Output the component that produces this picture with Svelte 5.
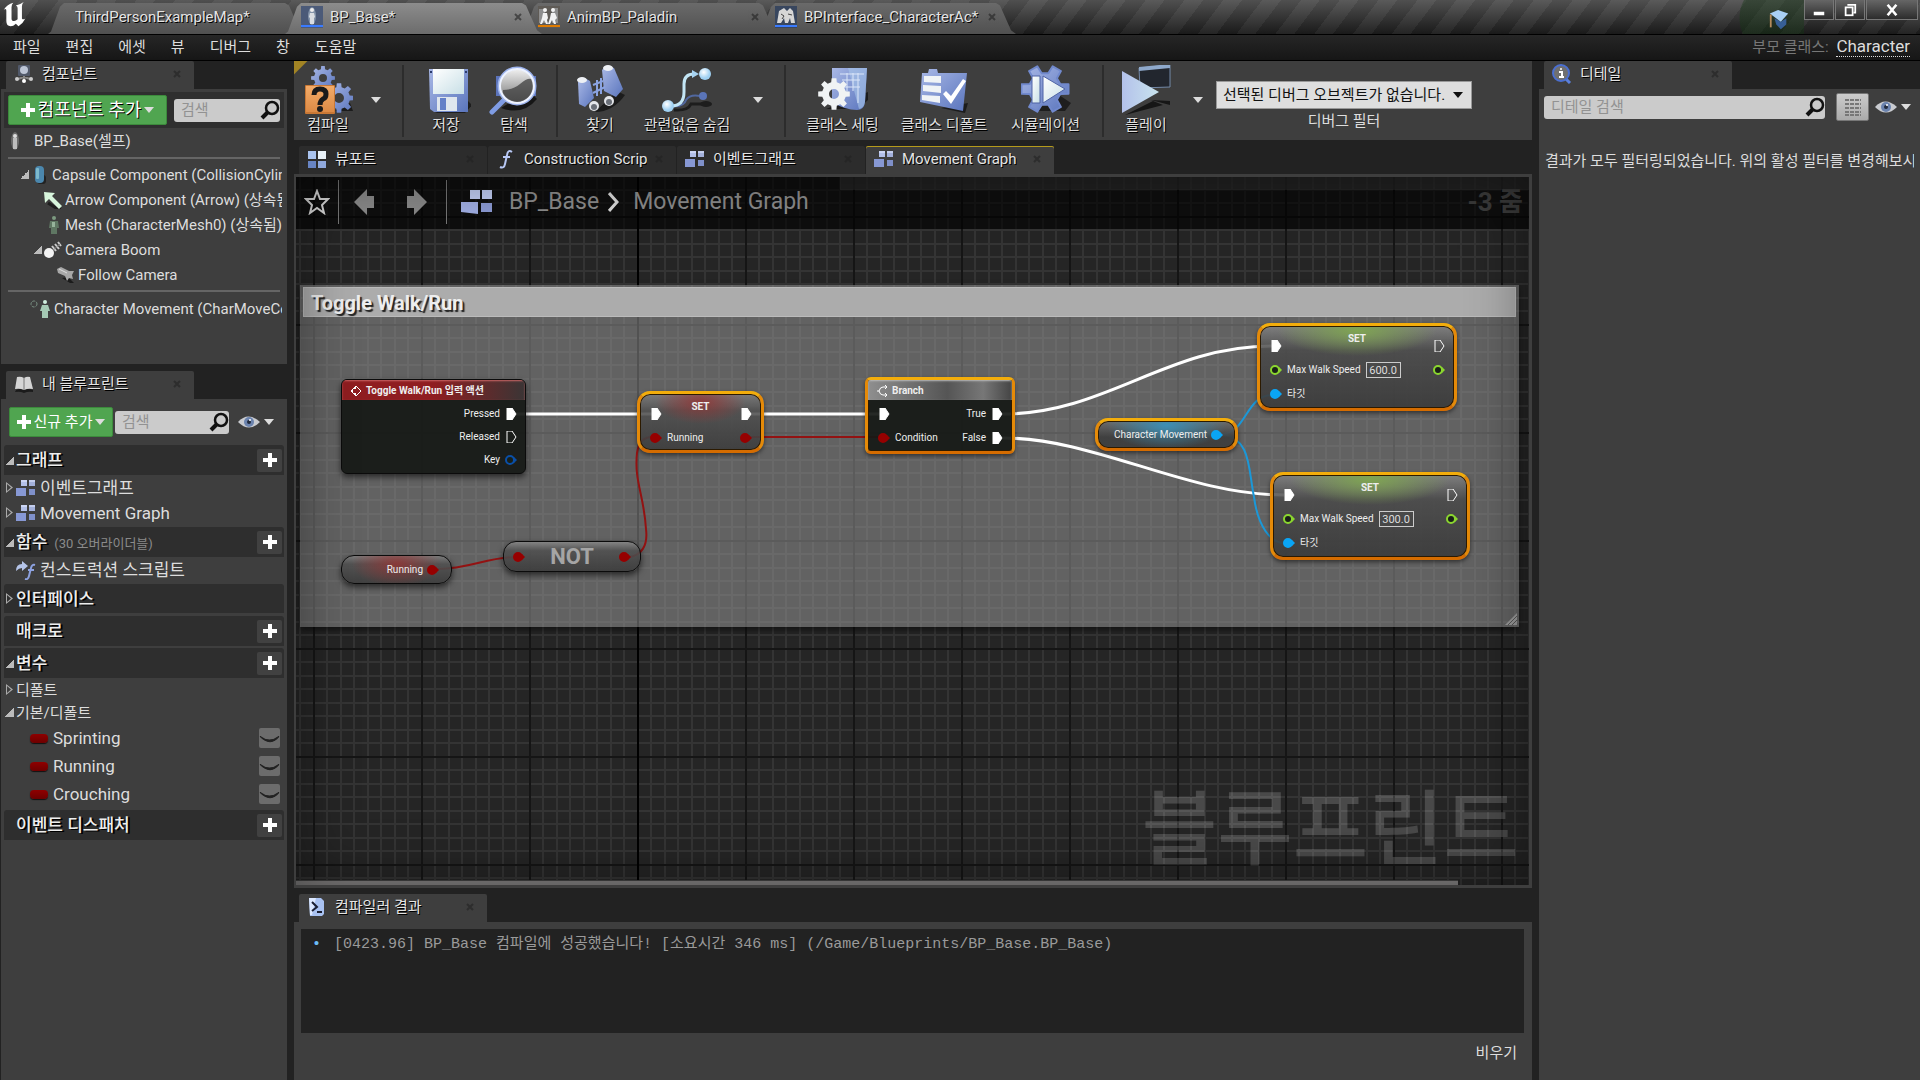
<script>
  const fileTabs = [
    { title: 'ThirdPersonExampleMap*', icon: '' },
    { title: 'BP_Base*', icon: 'actor', active: true },
    { title: 'AnimBP_Paladin', icon: 'anim' },
    { title: 'BPInterface_CharacterAc*', icon: 'iface' }
  ];

  const menus = ['파일', '편집', '에셋', '뷰', '디버그', '창', '도움말'];

  const tools = [
    { label: '컴파일', icon: 'compile', caret: true, sep: true, cls: 'w-compile' },
    { label: '저장', icon: 'save', cls: 'w-small' },
    { label: '탐색', icon: 'browse', sep: true, cls: 'w-small' },
    { label: '찾기', icon: 'find', cls: 'w-small' },
    { label: '관련없음 숨김', icon: 'hide', caret: true, sep: true, cls: 'w-wider' },
    { label: '클래스 세팅', icon: 'settings', cls: 'w-wide' },
    { label: '클래스 디폴트', icon: 'defaults', cls: 'w-wider' },
    { label: '시뮬레이션', icon: 'simulate', sep: true, cls: 'w-wide' },
    { label: '플레이', icon: 'play', caret: true, cls: 'w-small' }
  ];

  const components = [
    { name: 'Capsule Component (CollisionCylinder)', icon: 'capsule', depth: 1, open: true },
    { name: 'Arrow Component (Arrow) (상속됨)', icon: 'arrow', depth: 2 },
    { name: 'Mesh (CharacterMesh0) (상속됨)', icon: 'mesh', depth: 2 },
    { name: 'Camera Boom', icon: 'boom', depth: 2, open: true },
    { name: 'Follow Camera', icon: 'camera', depth: 3 }
  ];

  const graphTabs = [
    { title: '뷰포트', icon: 'viewport' },
    { title: 'Construction Script', icon: 'func' },
    { title: '이벤트그래프', icon: 'graph' },
    { title: 'Movement Graph', icon: 'graph', active: true }
  ];

  let variables = $state([
    { name: 'Sprinting', visible: false },
    { name: 'Running', visible: false },
    { name: 'Crouching', visible: false }
  ]);

  let speeds = $state([
    { id: 'run', value: '600.0' },
    { id: 'walk', value: '300.0' }
  ]);

  let log = $state(['[0423.96] BP_Base 컴파일에 성공했습니다! [소요시간 346 ms] (/Game/Blueprints/BP_Base.BP_Base)']);

  // outline of a cog wheel, hole included (fill-rule evenodd)
  function gear(cx, cy, outer, inner, hole, teeth) {
    const step = (Math.PI * 2) / teeth;
    const at = (r, a) => `${(cx + r * Math.cos(a)).toFixed(1)} ${(cy + r * Math.sin(a)).toFixed(1)}`;
    let d = '';
    for (let i = 0; i < teeth; i++) {
      const a = i * step;
      d += `${i ? 'L' : 'M'}${at(inner, a - step * 0.3)}L${at(outer, a - step * 0.19)}L${at(outer, a + step * 0.19)}L${at(inner, a + step * 0.3)}`;
    }
    d += 'Z';
    if (hole) d += `M${cx - hole} ${cy}a${hole} ${hole} 0 1 0 ${hole * 2} 0a${hole} ${hole} 0 1 0 ${-hole * 2} 0Z`;
    return d;
  }
</script>

{#snippet icon(name)}
  {#if name === 'actor'}
    <svg class="i22" viewBox="0 0 22 22"><rect width="22" height="22" fill="#4b5a78" /><ellipse cx="11" cy="10" rx="4" ry="9" fill="#8292a8" /><circle cx="11" cy="4" r="2" fill="#eee" /><path d="M9 7h4l1 4-1 1v6H9v-6l-1-1z" fill="#d9dde2" /><rect y="19" width="22" height="2" fill="#3a7bff" /></svg>
  {:else if name === 'anim'}
    <svg class="i22" viewBox="0 0 22 22"><rect width="22" height="22" fill="#5f5b56" /><path d="M1 3h6v14H1zM14 2h6v15h-6z" fill="#8d8d8d" /><g fill="#f2f2f2"><circle cx="7" cy="4" r="2" /><path d="M5 7h4l1 5-1 2 1 4H8l-2-4-2 4H2l2-6z" /><circle cx="15" cy="4" r="2" /><path d="M13 7h4l2 5-2 2 1 4h-2l-2-4-2 4h-2l2-6z" /></g><rect y="19" width="22" height="2" fill="#e07b00" /></svg>
  {:else if name === 'iface'}
    <svg class="i22" viewBox="0 0 22 22"><rect width="22" height="22" fill="#38465e" /><path d="M2 17l2-12 5-3 3 3 3-3 3 3 2 12h-4l-1-5-2 5h-3l-1-5-3 5z" fill="#d6d6d6" /><path d="M6 8l3 2-2 3M13 8l4 1" stroke="#444" fill="none" /><rect y="19" width="22" height="2" fill="#3a7bff" /></svg>
  {:else if name === 'components'}
    <svg class="i20" viewBox="0 0 20 20"><rect x="4" y="1" width="12" height="11" rx="1" fill="#51596a" /><circle cx="10" cy="6" r="4" fill="#bcc5d6" /><path d="M10 12v4M10 13l-6 2M10 13l6 2" stroke="#888" stroke-width="2" /><circle cx="3" cy="15" r="2" fill="#ccc" /><circle cx="17" cy="15" r="2" fill="#ccc" /><circle cx="10" cy="17" r="2" fill="#fff" /></svg>
  {:else if name === 'book'}
    <svg class="i20" viewBox="0 0 20 20"><path d="M2 16q4-2 8 0 4-2 9 0v2q-5-1-9 1-4-2-9-1z" fill="#1b1b1b" /><path d="M3 3q4-1 7 1 3-2 6-1l3 12q-5-1-9 1-4-2-9-1z" fill="#d5d5d5" /><path d="M10 4v12" stroke="#777" /></svg>
  {:else if name === 'details'}
    <svg class="i20" viewBox="0 0 20 20"><path d="M12 13l6 6" stroke="#5b80dd" stroke-width="3" /><circle cx="9" cy="9" r="8" fill="#707070" stroke="#4b6fd0" stroke-width="2" /><path d="M7 8h3v5M7 13h5" stroke="#fff" stroke-width="2" fill="none" /><circle cx="9" cy="5" r="1" fill="#fff" /></svg>
  {:else if name === 'compiler'}
    <svg class="i20" viewBox="0 0 20 20"><path d="M2 1h12l3 3v13l-2 2H3z" fill="#a9c2f2" /><path d="M2 1h7L5 18H3z" fill="#dce8ff" /><path d="M5 5l5 5-5 4M10 15h5" stroke="#1a1f33" stroke-width="2" fill="none" /></svg>
  {:else if name === 'viewport'}
    <svg class="i20" viewBox="0 0 20 20"><rect x="1" y="2" width="8" height="8" fill="#a9c3ee" /><rect x="11" y="2" width="8" height="8" fill="#e9f2f8" /><rect x="1" y="12" width="8" height="7" fill="#6885c4" /><rect x="11" y="12" width="8" height="7" fill="#8fa8dc" /></svg>
  {:else if name === 'func'}
    <svg class="i20" viewBox="0 0 20 20"><path d="M16 3q-4-3-5 3L9 15q-1 5-5 3M7 8h7" stroke="#b8c8f5" stroke-width="2" fill="none" /></svg>
  {:else if name === 'graph'}
    <svg class="i20" viewBox="0 0 20 20"><rect x="5" y="2" width="6" height="6" fill="#b3c0e8" /><rect x="13" y="2" width="6" height="6" fill="#a3b0da" /><path d="M0 10h10v8H0z" fill="#8798d4" /><rect x="13" y="11" width="6" height="6" fill="#7f90ca" /><path d="M5 3h6M13 3h6" stroke="#e5ebff" /></svg>
  {:else if name === 'script'}
    <svg class="i20" viewBox="0 0 20 20"><path d="M0 11q0-7 6-7V1l6 5-6 5V8Q3 8 0 11z" fill="#b5c4e8" /><path d="M19 5q-3-1-4 3l-2 8q-1 4-4 3M12 10h6" stroke="#8da2e0" stroke-width="2" fill="none" /></svg>
  {:else if name === 'self'}
    <svg class="i18" viewBox="0 0 18 18"><ellipse cx="9" cy="9" rx="4" ry="9" fill="#6b6b6b" /><circle cx="9" cy="4" r="2" fill="#ddd" /><path d="M7 6h4v11H7z" fill="#bdbdbd" /></svg>
  {:else if name === 'capsule'}
    <svg class="i18" viewBox="0 0 18 18"><rect x="6" y="9" width="9" height="9" rx="3" fill="#222" /><rect x="4" y="0" width="9" height="17" rx="4" fill="#4b87ad" /><rect x="5" y="2" width="3" height="11" rx="1" fill="#7db9cc" /></svg>
  {:else if name === 'arrow'}
    <svg class="i18" viewBox="0 0 18 18"><path d="M4 12l8 5 5 1" stroke="#1d1d1d" stroke-width="3" /><path d="M0 1l11 1-3 3 10 10-3 3L5 8l-4 4z" fill="#d7f5dc" /></svg>
  {:else if name === 'mesh'}
    <svg class="i18" viewBox="0 0 18 18"><circle cx="10" cy="2" r="2" fill="#7c9a80" /><path d="M6 5h8l1 7h-2v6H7v-6H5z" fill="#5f7763" /><path d="M8 6h3v5H8z" fill="#96b39b" /></svg>
  {:else if name === 'boom'}
    <svg class="i18" viewBox="0 0 18 18"><path d="M8 5l4 5M11 3l4 5M14 1l3 4" stroke="#ccc" stroke-width="2" /><path d="M7 11l9-8" stroke="#888" /><circle cx="5" cy="12" r="5" fill="#f2f2f2" /></svg>
  {:else if name === 'camera'}
    <svg class="i18" viewBox="0 0 18 18"><path d="M5 12l8 5h4l-6-6z" fill="#1b1b1b" /><path d="M0 3l4-2 8 4 5 0-2 4 1 4-4-1-2 3-2-5-7-3z" fill="#a8a8a8" /><path d="M2 3l8 4" stroke="#ddd" /></svg>
  {:else if name === 'move'}
    <svg class="i20" viewBox="0 0 20 20"><circle cx="4" cy="5" r="3" fill="none" stroke="#799183" stroke-dasharray="3 1" /><circle cx="15" cy="3" r="2" fill="#cfeedd" /><path d="M12 6h6l2 6h-2v7h-3v-6v6h-3v-7h-2z" fill="#a5c9b4" /></svg>
  {:else if name === 'eye'}
    <svg class="eye" viewBox="0 0 22 14"><path d="M0 7Q10-4 22 7 11 18 0 7z" fill="#c9cbd0" /><circle cx="11" cy="7" r="5" fill="#6b83ae" /><circle cx="11" cy="7" r="2" fill="#222b3e" /><circle cx="12" cy="5" r="1" fill="#fff" /></svg>
  {:else if name === 'search'}
    <svg class="i20" viewBox="0 0 20 20"><circle cx="12" cy="8" r="6" fill="none" stroke="#111" stroke-width="2.5" /><path d="M8 12l-6 6" stroke="#111" stroke-width="4" /></svg>
  {:else if name === 'compile'}
    <svg class="i50" viewBox="0 0 50 50"><path d="M32 46h18l-3-8z" fill="#1c1c1c" /><path d={gear(20, 13, 12, 9, 4, 8)} fill="url(#steel)" fill-rule="evenodd" /><path d={gear(36, 33, 15, 11, 5, 8)} fill="url(#steel)" fill-rule="evenodd" /><rect x="2" y="20" width="30" height="29" rx="1" fill="#c97835" /><path d="M3 21h28v26H3z" fill="url(#amber)" /><path d="M11 30q0-6 6-6t6 5q0 4-3 5-3 2-3 6" fill="none" stroke="#1a1a1a" stroke-width="5" /><circle cx="17" cy="44" r="3" fill="#1a1a1a" /></svg>
  {:else if name === 'save'}
    <svg class="i50" viewBox="0 0 50 50"><path d="M14 48h30l7-8-6-6z" fill="#1e1e1e" /><path d="M8 4h39v43H13l-4-3z" fill="url(#steel)" /><path d="M12 4h31v25H12z" fill="url(#paper)" /><path d="M16 32h20v14H16z" fill="#dfe6ee" /><path d="M19 33h6v12h-6z" fill="#6480c8" /><path d="M9 6h2v2H9zM44 6h2v2h-2z" fill="#2c3c6c" /></svg>
  {:else if name === 'browse'}
    <svg class="i50" viewBox="0 0 50 50"><path d="M12 43q22 8 36-9l-8-8z" fill="#161616" /><path d="M7 11h40v20H7z" fill="#5b73ba" /><path d="M16 34L3 47" stroke="#7f9ce4" stroke-width="5" stroke-linecap="round" /><circle cx="28" cy="21" r="18" fill="url(#glass)" stroke="#9db3ec" stroke-width="3" /><circle cx="28" cy="21" r="17" fill="none" stroke="#eef3ff" stroke-width="2" /><path d="M14 25q10 0 17-6t11-5a15 15 0 0 1-28 14z" fill="#3e3e3e" opacity=".75" /></svg>
  {:else if name === 'find'}
    <svg class="i50" viewBox="0 0 50 50"><path d="M20 47q18 0 30-17l-8-4z" fill="#1c1c1c" /><path d="M3 17q5-6 12-1l4 17-9 9-6-3z" fill="url(#steel)" /><path d="M27 5q5-6 12-2l9 21-7 8-12-6z" fill="url(#steel)" /><ellipse cx="7" cy="15" rx="5" ry="3" fill="#eef1f5" /><ellipse cx="33" cy="3" rx="5" ry="3" fill="#eef1f5" /><path d="M22 15v16M26 13v16M18 28l12-6M18 20l10-4" stroke="#8aa3e2" stroke-width="2" /><circle cx="19" cy="41" r="5" fill="#e4e6ea" /><circle cx="34" cy="36" r="5" fill="#e4e6ea" /><circle cx="19" cy="42" r="3" fill="#6a6f78" /><circle cx="34" cy="37" r="3" fill="#6a6f78" /></svg>
  {:else if name === 'hide'}
    <svg class="i50" viewBox="0 0 50 50"><path d="M12 45q14 1 17-6h12" stroke="#1d1d1d" stroke-width="3" fill="none" /><ellipse cx="44" cy="39" rx="6" ry="3" fill="#1d1d1d" /><path d="M10 41q12 1 14-6 4-6 14-4" stroke="#51689f" stroke-width="2" fill="none" /><path d="M9 41q13 0 13-14V19q0-10 10-10" stroke="#c3e6f6" stroke-width="3" fill="none" /><path d="M30 5l7 4-7 4z" fill="#a8d4f2" /><circle cx="43" cy="9" r="6" fill="url(#ball)" /><circle cx="41" cy="31" r="4" fill="#5a74b7" /><circle cx="6" cy="41" r="6" fill="url(#ball)" /></svg>
  {:else if name === 'settings'}
    <svg class="i50" viewBox="0 0 50 50"><path d="M8 44h32l10-9v-8z" fill="#1c1c1c" /><path d="M14 3h35l-2 34q-1 8-8 8-12 0-25-8z" fill="url(#steel)" /><path d="M30 3h19l-2 34q-1 6-6 7z" fill="#a9c6ea" opacity=".6" /><path d="M29 8v18M35 8v18M40 8v30M22 9h24M24 15h18M26 22h16" stroke="#dbe6f9" /><path d={gear(16, 29, 16, 12, 5, 8)} fill="#f0f3f4" fill-rule="evenodd" /></svg>
  {:else if name === 'defaults'}
    <svg class="i50" viewBox="0 0 50 50"><path d="M22 43l24 5 3-10z" fill="#1c1c1c" /><path d="M3 8h6l1-4h8l1 4h29l-4 38L1 37z" fill="url(#steel)" /><path d="M5 11h17v7L5 17zM4 20l18 1v7L4 26zM3 30l18 1v7L3 35z" fill="#f0f3f6" /><path d="M24 29l3-3 5 5L44 14l3 2-15 23z" fill="#fff" /></svg>
  {:else if name === 'simulate'}
    <svg class="i50" viewBox="0 0 50 50"><path d="M14 46h30l6-8-12-8z" fill="#1e1e1e" /><path d={gear(24, 24, 24, 16, 0, 6)} fill="url(#steel)" stroke="#7189cd" stroke-width="2" stroke-linejoin="round" /><path d="M11 11h8v27h-8z" fill="url(#paper)" stroke="#4e63a5" /><path d="M22 11l22 13-22 14z" fill="url(#paper)" stroke="#4e63a5" /></svg>
  {:else if name === 'play'}
    <svg class="i50" viewBox="0 0 50 50"><path d="M4 50l38-10-10-4zM30 35l19 1v4z" fill="#161616" /><path d="M18 3l31-3v22l-30 1z" fill="#22262e" stroke="#7389a8" /><path d="M18 2l31-3v4L18 6z" fill="#8fa9cb" /><path d="M1 6l37 21L1 48z" fill="url(#sky)" /></svg>
  {/if}
{/snippet}

{#snippet closeX()}
  <button class="close" aria-label="닫기"><svg viewBox="0 0 8 8"><path d="M1 1l6 6M7 1l-6 6" stroke="currentColor" stroke-width="2" /></svg></button>
{/snippet}

{#snippet plus()}
  <svg class="plus" viewBox="0 0 14 14"><path d="M7 0v14M0 7h14" stroke="#fff" stroke-width="4" /></svg>
{/snippet}

{#snippet exec(on)}
  <svg class="pin" viewBox="0 0 12 12"><path d="M2 0h5l4 6-4 6H2z" fill={on ? '#fff' : 'none'} stroke="#fff" /></svg>
{/snippet}

{#snippet pin(color, on)}
  <svg class="pin" viewBox="0 0 12 12"><path d="M9 3l3 3-3 3z" fill={color} /><circle cx="5" cy="6" r="4" fill={on ? color : '#1a2018'} stroke={color} stroke-width="2" /></svg>
{/snippet}

{#snippet panelTab(title, name)}
  <div class="ptab">
    {@render icon(name)}
    <button class="tablabel">{title}</button>
    {@render closeX()}
  </div>
{/snippet}

{#snippet section(title, open, note, add)}
  <div class="section" class:short={!add}>
    <span class="tri" class:open class:closed={open === false}></span>
    <h3>{title}</h3>
    {#if note}<small>{note}</small>{/if}
    {#if add}
      <button class="add" aria-label="{title} 추가">{@render plus()}</button>
    {/if}
  </div>
{/snippet}

{#snippet speedNode(speed)}
  <div class="node pure selected speed {speed.id}">
    <div class="title">SET</div>
    <div class="pins">
      <div class="col">
        <div class="row">{@render exec(true)}</div>
        <div class="row">{@render pin('#8bd62f', false)}<label for={speed.id}>Max Walk Speed</label><input id={speed.id} bind:value={speed.value} /></div>
        <div class="row">{@render pin('#0aa5f5', true)}타깃</div>
      </div>
      <div class="col">
        <div class="row">{@render exec(false)}</div>
        <div class="row">{@render pin('#8bd62f', false)}</div>
      </div>
    </div>
  </div>
{/snippet}

<div class="editor">
  <!-- shared paints for the toolbar icons -->
  <svg class="paints" aria-hidden="true">
    <linearGradient id="steel" x1="0" y1="0" x2="1" y2="1"><stop offset="0" stop-color="#a9b8e6" /><stop offset="1" stop-color="#5a75bd" /></linearGradient>
    <linearGradient id="amber" x1="0" y1="0" x2="0" y2="1"><stop offset="0" stop-color="#f3ab68" /><stop offset="1" stop-color="#dc8a45" /></linearGradient>
    <linearGradient id="paper" x1="0" y1="0" x2="1" y2="1"><stop offset="0" stop-color="#fff" /><stop offset="1" stop-color="#c8dfe6" /></linearGradient>
    <linearGradient id="sky" x1="0" y1="0" x2="1" y2="0"><stop offset="0" stop-color="#b3c1ea" /><stop offset="1" stop-color="#c9e4ee" /></linearGradient>
    <linearGradient id="glass" x1="0" y1="0" x2="0" y2="1"><stop offset="0" stop-color="#f4f4f4" /><stop offset="1" stop-color="#6d6d6d" /></linearGradient>
    <radialGradient id="ball" cx="40%" cy="35%"><stop offset="0" stop-color="#fff" /><stop offset="1" stop-color="#9fd0f2" /></radialGradient>
  </svg>

  <header class="titlebar">
    <svg class="logo" viewBox="0 0 26 30"><path d="M0 9Q4 3 11 1q-2 2-2 5v13q0 3 3 3 2 0 4-2V7q0-2-2-3 5-1 9-4-2 2-2 5v14q1 2 4 0-3 6-8 9l-3-3q-3 3-6 3-5 0-5-6V10Q3 7 0 9z" fill="#fff" /></svg>
    <div class="filetabs">
      {#each fileTabs as tab}
        <div class="filetab" class:active={tab.active}>
          {#if tab.icon}{@render icon(tab.icon)}{/if}
          <button class="tablabel">{tab.title}</button>
          {#if tab.icon}{@render closeX()}{/if}
        </div>
      {/each}
    </div>
    <button class="tutorial" aria-label="튜토리얼"><svg viewBox="0 0 22 24"><path d="M6 10l7 4 6-4v7l-6 5-5-5z" fill="#375f96" /><path d="M1 5l9-4 11 4-8 9z" fill="#a9d0f5" /><path d="M2 6v14" stroke="#b58b5b" stroke-width="2" /></svg></button>
    <div class="winbtns">
      <button aria-label="최소화"><svg viewBox="0 0 16 16"><path d="M2 10h12v4H2z" fill="#fff" /></svg></button>
      <button aria-label="복원"><svg viewBox="0 0 16 16"><path d="M6 3V2h8v9h-2" fill="none" stroke="#fff" stroke-width="2" /><rect x="3" y="5" width="8" height="9" fill="none" stroke="#fff" stroke-width="2" /></svg></button>
      <button class="wide" aria-label="창 닫기"><svg viewBox="0 0 16 16"><path d="M3 2l10 12M13 2L3 14" stroke="#fff" stroke-width="3" /></svg></button>
    </div>
  </header>

  <nav class="menubar">
    {#each menus as menu}
      <button>{menu}</button>
    {/each}
    <span class="parent">부모 클래스: <a href="#character">Character</a></span>
  </nav>

  <div class="workspace">
    <aside class="left">
      {@render panelTab('컴포넌트', 'components')}
      <section class="panel components">
        <div class="findbar">
          <button class="green big">{@render plus()}컴포넌트 추가<span class="caret"></span></button>
          <label class="search"><input type="search" placeholder="검색" aria-label="컴포넌트 검색" />{@render icon('search')}</label>
        </div>
        <div class="item root">{@render icon('self')}<span>BP_Base(셀프)</span></div>
        <hr />
        {#each components as c}
          <div class="item depth{c.depth}">
            <span class="tri" class:open={c.open}></span>
            {@render icon(c.icon)}
            <span class="clip">{c.name}</span>
          </div>
        {/each}
        <hr />
        <div class="item movement">{@render icon('move')}<span class="clip">Character Movement (CharMoveComp) (상속됨)</span></div>
      </section>

      {@render panelTab('내 블루프린트', 'book')}
      <section class="panel blueprint">
        <div class="addbar">
          <button class="green">{@render plus()}신규 추가<span class="caret"></span></button>
          <label class="search"><input type="search" placeholder="검색" aria-label="블루프린트 검색" />{@render icon('search')}</label>
          <button class="view" aria-label="보기 옵션">{@render icon('eye')}<span class="caret"></span></button>
        </div>
        {@render section('그래프', true, '', true)}
        <div class="entry"><span class="tri closed"></span>{@render icon('graph')}이벤트그래프</div>
        <div class="entry"><span class="tri closed"></span>{@render icon('graph')}Movement Graph</div>
        {@render section('함수', true, '(30 오버라이더블)', true)}
        <div class="entry"><span class="tri"></span>{@render icon('script')}컨스트럭션 스크립트</div>
        {@render section('인터페이스', false, '', false)}
        {@render section('매크로', null, '', true)}
        {@render section('변수', true, '', true)}
        <div class="entry category"><span class="tri closed"></span>디폴트</div>
        <div class="entry category"><span class="tri open"></span>기본/디폴트</div>
        {#each variables as v}
          <div class="entry variable">
            <span class="pill"></span>{v.name}
            <button class="lid" aria-label="{v.name} 표시" aria-pressed={v.visible} onclick={() => (v.visible = !v.visible)}>
              <svg viewBox="0 0 20 20"><path d="M1 8q9 7 18 0-8 10-18 0z" fill="#222" stroke="#222" /></svg>
            </button>
          </div>
        {/each}
        {@render section('이벤트 디스패처', null, '', true)}
      </section>
    </aside>

    <main>
      <div class="toolbar">
        {#each tools as t}
          <button class="tool {t.cls}">{@render icon(t.icon)}<span>{t.label}</span></button>
          {#if t.caret}<button class="drop" aria-label="{t.label} 옵션"><span class="caret"></span></button>{/if}
          {#if t.sep}<span class="sep"></span>{/if}
        {/each}
        <div class="debug">
          <div class="combo">
            <select id="debug"><option>선택된 디버그 오브젝트가 없습니다.</option></select>
            <span class="caret"></span>
          </div>
          <label for="debug">디버그 필터</label>
        </div>
      </div>

      <div class="graphtabs">
        {#each graphTabs as tab}
          <div class="ptab" class:active={tab.active} class:idle={!tab.active}>
            {@render icon(tab.icon)}
            <button class="tablabel">{tab.title}</button>
            {@render closeX()}
          </div>
        {/each}
      </div>

      <div class="graph">
        <svg class="grid">
          <defs>
            <pattern id="cells" x="17" y="39" width="108" height="108" patternUnits="userSpaceOnUse">
              <path d="M14 0v108M28 0v108M41 0v108M55 0v108M68 0v108M82 0v108M95 0v108M0 14h108M0 28h108M0 41h108M0 55h108M0 68h108M0 82h108M0 95h108" stroke="#343434" stroke-width="2" />
              <path d="M1 0v108M0 1h108" stroke="#151515" stroke-width="2" />
            </pattern>
          </defs>
          <rect width="100%" height="100%" fill="url(#cells)" />
          <path d="M342 0v1200" stroke="#000" stroke-width="2" />
        </svg>
        <div class="watermark">블루프린트</div>

        <div class="comment">
          <h2>Toggle Walk/Run</h2>
          <svg class="grip" viewBox="0 0 12 12"><path d="M0 12L12 0v12z" fill="#999" /><path d="M3 12l9-9M7 12l5-5" stroke="#555" /></svg>
        </div>

        <svg class="wires">
          <g fill="none" stroke="#fff" stroke-width="3">
            <path d="M220 237H356M454 237H584" />
            <path d="M707 237C810 237 870 169 976 169" />
            <path d="M707 261C800 261 890 318 988 318" />
          </g>
          <g fill="none" stroke="#931212" stroke-width="2">
            <path d="M452 260H586" />
            <path d="M141 392C175 392 190 380 221 380" />
            <path d="M332 380C346 379 352 368 350 352 348 318 338 304 341 276 343 262 350 260 356 260" />
          </g>
          <g fill="none" stroke="#1b98d8" stroke-width="2">
            <path d="M926 257C950 257 950 218 976 218" />
            <path d="M926 257C955 262 952 290 958 320 962 350 975 366 988 366" />
          </g>
        </svg>

        <div class="node event">
          <div class="head"><svg viewBox="0 0 12 12"><path d="M6 1l5 5-5 5-5-5z" fill="none" stroke="#fff" /><path d="M6 1L1 6l5 5V8H3V4h3z" fill="#fff" /></svg>Toggle Walk/Run 입력 액션</div>
          <div class="row">Pressed{@render exec(true)}</div>
          <div class="row">Released{@render exec(false)}</div>
          <div class="row">Key{@render pin('#0a4fa8', false)}</div>
        </div>

        <div class="node pure selected setrun red">
          <div class="title">SET</div>
          <div class="pins">
            <div class="col">
              <div class="row">{@render exec(true)}</div>
              <div class="row">{@render pin('#960000', true)}Running</div>
            </div>
            <div class="col">
              <div class="row">{@render exec(true)}</div>
              <div class="row">{@render pin('#960000', true)}</div>
            </div>
          </div>
        </div>

        <div class="node selected branch">
          <div class="head"><svg viewBox="0 0 12 12"><path d="M1 6h2q1-4 4-4h4M3 6q1 4 4 4h4M9 0l2 2-2 2M9 8l2 2-2 2" fill="none" stroke="#fff" /></svg>Branch</div>
          <div class="pins">
            <div class="col">
              <div class="row">{@render exec(true)}</div>
              <div class="row">{@render pin('#960000', true)}Condition</div>
            </div>
            <div class="col end">
              <div class="row">True{@render exec(true)}</div>
              <div class="row">False{@render exec(true)}</div>
            </div>
          </div>
        </div>

        {#each speeds as speed}
          {@render speedNode(speed)}
        {/each}

        <div class="node pure selected compact charmove">Character Movement{@render pin('#0aa5f5', true)}</div>
        <div class="node pure compact not">{@render pin('#960000', true)}<strong>NOT</strong>{@render pin('#960000', true)}</div>
        <div class="node pure compact getrun red">Running{@render pin('#960000', true)}</div>

        <div class="crumbs">
          <button aria-label="즐겨찾기"><svg class="star" viewBox="0 0 26 26"><path d="M13 2l3 8h8l-6 6 2 8-7-5-7 5 2-8-6-6h8z" fill="none" stroke="#ddd" stroke-width="2" /></svg></button>
          <i></i>
          <button class="back" aria-label="뒤로"><svg class="nav" viewBox="0 0 22 28"><path d="M1 14L14 1v7h7v12h-7v7z" fill="#8a8a8a" /></svg></button>
          <button class="forward" aria-label="앞으로"><svg class="nav" viewBox="0 0 22 28"><path d="M21 14L8 1v7H1v12h7v7z" fill="#8a8a8a" /></svg></button>
          <i></i>
          <svg class="bigicon" viewBox="0 0 32 26"><path d="M9 1h10v9H9zM21 1h10v9H21z" fill="#c3cff5" /><path d="M0 13h17v12L0 23z" fill="#a2b0e6" /><path d="M20 14h11v9H20z" fill="#8d9cd6" /></svg>
          <a href="#base">BP_Base</a>
          <svg class="chev" viewBox="0 0 12 22"><path d="M1 2l8 9-8 9" fill="none" stroke="#ddd" stroke-width="3" /></svg>
          <span>Movement Graph</span>
          <strong>-3 줌</strong>
        </div>
        <div class="toast"></div>
        <div class="scroll"></div>
      </div>

      <div class="results">
        {@render panelTab('컴파일러 결과', 'compiler')}
        <section class="panel">
          <ul>
            {#each log as line}
              <li>{line}</li>
            {/each}
          </ul>
          <button class="clear" onclick={() => (log = [])}>비우기</button>
        </section>
      </div>
    </main>

    <aside class="right">
      {@render panelTab('디테일', 'details')}
      <section class="panel">
        <div class="detailbar">
          <label class="search"><input type="search" placeholder="디테일 검색" aria-label="디테일 검색" />{@render icon('search')}</label>
          <button class="matrix" aria-label="프로퍼티 매트릭스"><svg viewBox="0 0 18 18"><path d="M1 2h16M1 6h16M1 10h16M1 14h16M1 17h16" stroke="#777" stroke-width="2" stroke-dasharray="4 1" /></svg></button>
          <button class="view" aria-label="보기 옵션">{@render icon('eye')}<span class="caret"></span></button>
        </div>
        <p>결과가 모두 필터링되었습니다. 위의 활성 필터를 변경해보시기 바랍니다.</p>
      </section>
    </aside>
  </div>
</div>

<style>
  :global(body) {
    margin: 0;
    background: #222;
  }
  .editor {
    display: flex;
    flex-direction: column;
    min-height: 100vh;
    overflow: hidden;
    background: #222;
    color: #ddd;
    font: 15px/20px Roboto, 'Noto Sans CJK KR', sans-serif;
  }
  .editor * {
    box-sizing: border-box;
  }
  svg {
    display: block;
    flex: none;
  }
  .paints {
    position: absolute;
    width: 0;
    height: 0;
  }
  button {
    margin: 0;
    padding: 0;
    border: 0;
    background: none;
    color: inherit;
    font: inherit;
    white-space: nowrap;
  }
  input, select {
    border: 0;
    outline: 0;
    font: inherit;
  }
  h2, h3, p, ul {
    margin: 0;
    padding: 0;
    font-weight: normal;
  }
  .i18 { width: 18px; height: 18px; }
  .i20 { width: 20px; height: 20px; }
  .i22 { width: 22px; height: 22px; }
  .i50 { width: 50px; height: 50px; }
  .eye { width: 22px; height: 14px; }
  .plus { width: 14px; height: 14px; }

  /* title bar */
  .titlebar {
    display: flex;
    align-items: flex-start;
    height: 34px;
    background:
      linear-gradient(rgba(110, 110, 110, 0.6), rgba(20, 20, 20, 0.6)),
      repeating-linear-gradient(127deg, #222 0 16px, #3c3c3c 16px 31px);
  }
  .logo {
    width: 26px;
    height: 26px;
    margin: 2px 0 0 2px;
  }
  .filetabs {
    display: flex;
    flex: 1;
    padding: 3px 0 0 20px;
  }
  .filetab {
    display: flex;
    align-items: center;
    position: relative;
    width: 257px;
    height: 31px;
    margin-right: -20px;
    padding: 0 20px 3px 16px;
    background: linear-gradient(#6a6a6a, #505050);
    clip-path: polygon(0 100%, 3px 92%, 12px 12%, 16px 0, 237px 0, 241px 8%, 252px 88%, 100% 100%);
  }
  .filetab:nth-child(1) { padding-left: 27px; }
  .filetab:nth-child(3) { z-index: 2; }
  .filetab:nth-child(4) { z-index: 1; }
  .filetab.active {
    z-index: 3;
    background: linear-gradient(#8c8c8c, #6c6c6c);
  }
  .tablabel {
    flex: 1;
    min-width: 0;
    overflow: hidden;
    text-align: left;
    color: #e4e4e4;
    text-shadow: 1px 1px 0 #000;
  }
  .filetab .i22 { margin-right: 7px; }
  .close {
    flex: none;
    width: 8px;
    height: 8px;
    color: #222;
    opacity: 0.6;
  }
  .close svg { width: 8px; height: 8px; }
  .tutorial {
    width: 76px;
    height: 34px;
    padding: 5px 0 0 40px;
    background: radial-gradient(circle at 50px 18px, rgba(20, 55, 20, 0.4) 38px, transparent 39px);
  }
  .tutorial svg { width: 22px; height: 22px; }
  .winbtns {
    display: flex;
    gap: 1px;
    padding-right: 2px;
  }
  .winbtns button {
    display: grid;
    place-items: center;
    width: 30px;
    height: 20px;
    border: 1px solid #777;
    border-top: 0;
    background: linear-gradient(#666, #2c2c2c);
  }
  .winbtns .wide { width: 52px; }
  .winbtns svg { width: 16px; height: 14px; }

  .menubar {
    display: flex;
    align-items: center;
    gap: 25px;
    height: 27px;
    padding: 0 10px 2px 13px;
    border-top: 1px solid #000;
    border-bottom: 1px solid #000;
    background: linear-gradient(#262626, #161616);
  }
  .parent {
    margin-left: auto;
    color: #777;
  }
  .parent a {
    margin-left: 4px;
    border-bottom: 1px dotted #ddd;
    color: #ddd;
    font-size: 17px;
    text-decoration: none;
  }

  .workspace {
    display: grid;
    grid-template-columns: 286px minmax(0, 1fr) 381px;
    flex: 1;
    column-gap: 7px;
    padding-left: 1px;
  }
  .left, .right, main, .results {
    display: flex;
    flex-direction: column;
    min-width: 0;
  }
  .panel {
    background: #3e3e3e;
    overflow: hidden;
  }
  .ptab {
    display: flex;
    align-items: center;
    gap: 8px;
    width: 188px;
    height: 28px;
    margin-left: 5px;
    padding: 0 13px 2px 8px;
    border-radius: 2px 2px 0 0;
    background: #3e3e3e;
  }

  /* search boxes and buttons */
  .search {
    display: flex;
    align-items: center;
    flex: 1;
    min-width: 0;
    height: 23px;
    border-radius: 3px;
    background: #cbcbcb;
  }
  .search input {
    flex: 1;
    min-width: 0;
    padding: 0 7px;
    background: none;
  }
  .search input::placeholder { color: #929292; opacity: 1; }
  .green {
    display: flex;
    align-items: center;
    justify-content: center;
    gap: 3px;
    width: 104px;
    height: 30px;
    border: 1px solid #3c8a3c;
    border-radius: 2px;
    background: #50a550;
    color: #fff;
  }
  .green.big {
    width: 159px;
    font-size: 18px;
    text-shadow: 1px 1px 0 #000;
  }
  .caret {
    flex: none;
    border: 5px solid transparent;
    border-top: 6px solid #ddd;
    border-bottom: 0;
  }
  .view {
    display: flex;
    align-items: center;
    gap: 4px;
  }

  /* component tree */
  .components {
    height: 275px;
    margin-bottom: 7px;
    padding: 3px 3px 0;
  }
  .findbar {
    display: flex;
    align-items: center;
    gap: 7px;
    height: 36px;
    padding: 0 4px;
    background: #2f2f2f;
  }
  .item {
    display: flex;
    align-items: center;
    height: 25px;
    margin-right: 2px;
    white-space: nowrap;
    overflow: hidden;
  }
  .item.root { height: 26px; padding-left: 2px; gap: 7px; }
  .clip { overflow: hidden; }
  .components hr {
    height: 2px;
    margin: 3px 4px;
    border: 0;
    background: #656565;
  }
  .depth1 { padding-left: 15px; }
  .depth2 { padding-left: 28px; }
  .depth3 { padding-left: 41px; }
  .item .i18 { margin-right: 3px; }
  .item.movement { height: 27px; padding-left: 26px; }
  .item.movement .clip { margin-left: 4px; }
  .tri {
    flex: none;
    width: 12px;
    height: 12px;
  }
  .tri.open { width: 9px; height: 9px; margin: 0 2px 0 1px; background: linear-gradient(135deg, transparent 50%, #bbb 50%); }
  .tri.closed { width: 7px; height: 11px; margin: 0 3px 0 2px; background: #aaa; clip-path: polygon(0 0, 100% 50%, 0 100%, 0 0, 1px 2px, 1px 9px, 5px 50%, 1px 2px); }

  /* my blueprint */
  .blueprint {
    flex: 1;
    padding: 8px 3px;
  }
  .addbar {
    display: flex;
    align-items: center;
    gap: 2px;
    margin-bottom: 8px;
    padding: 0 10px 0 5px;
  }
  .addbar .view { margin-left: 7px; }
  .section {
    display: flex;
    align-items: center;
    height: 30px;
    margin-top: 2px;
    padding-right: 2px;
    border-radius: 3px 3px 0 0;
    background: #2e2e2e;
  }
  .section.short { height: 29px; margin-bottom: 3px; }
  .section h3 {
    color: #eee;
    font-size: 17px;
    font-weight: 500;
    text-shadow: 2px 1px 0 #000;
  }
  .section small {
    margin: 3px 0 0 7px;
    color: #8a8a8a;
    font-size: 13px;
  }
  .add {
    display: grid;
    place-items: center;
    width: 25px;
    height: 23px;
    margin-left: auto;
    border-radius: 2px;
    background: #414141;
  }
  .entry {
    display: flex;
    align-items: center;
    height: 25px;
    font-size: 17px;
  }
  .entry .i20 { margin-right: 4px; }
  .entry.category { height: 23px; font-size: 15px; }
  .entry.variable { height: 28px; padding: 0 4px 0 26px; }
  .pill {
    width: 18px;
    height: 9px;
    margin-right: 5px;
    border-radius: 4px;
    background: linear-gradient(#8f0000, #6d0000);
    box-shadow: 0 1px 1px #111;
  }
  .lid {
    width: 21px;
    height: 20px;
    margin-left: auto;
    border-radius: 2px;
    background: #6c6c6c;
  }

  /* toolbar */
  .toolbar {
    display: flex;
    height: 79px;
    padding: 4px 0 0 4px;
    background: linear-gradient(135deg, #a28424 9px, #3e3e3e 10px);
  }
  .tool {
    display: flex;
    flex-direction: column;
    align-items: center;
    flex: none;
    text-shadow: 1px 1px 0 #000;
  }
  .w-compile { width: 60px; }
  .w-small { width: 68px; }
  .w-wide { width: 97px; }
  .w-wider { width: 106px; }
  .drop {
    width: 36px;
    height: 70px;
    flex: none;
  }
  .drop .caret { display: block; width: 0; margin: 0 auto; }
  .sep {
    flex: none;
    width: 2px;
    height: 72px;
    margin: 0 8px;
    background: #2c2c2c;
  }
  .debug {
    display: flex;
    flex-direction: column;
    align-items: center;
    gap: 2px;
    padding-top: 16px;
  }
  .combo {
    position: relative;
  }
  .combo select {
    display: block;
    width: 256px;
    height: 28px;
    padding: 0 6px;
    appearance: none;
    border: 1px solid #999;
    background: #dedede;
    color: #111;
  }
  .combo .caret {
    position: absolute;
    top: 11px;
    right: 9px;
    border-top-color: #111;
    pointer-events: none;
  }

  .graphtabs {
    display: flex;
    gap: 1px;
    padding: 6px 0 0 5px;
  }
  .graphtabs .ptab { margin: 0; }
  .ptab.idle { background: #2c2c2c; }
  .ptab.active { box-shadow: inset 0 1px #b59b1c; }

  /* graph canvas */
  .graph {
    position: relative;
    flex: 1;
    min-height: 600px;
    border: 3px solid #3e3e3e;
    border-left-width: 2px;
    overflow: hidden;
    background: #252525;
    font-size: 10px;
    line-height: 14px;
  }
  .graph::after {
    content: '';
    position: absolute;
    inset: 0;
    box-shadow: inset 0 0 60px rgba(0, 0, 0, 0.45);
    pointer-events: none;
  }
  .grid, .wires {
    position: absolute;
    inset: 0;
    width: 100%;
    height: 100%;
  }
  .watermark {
    position: absolute;
    right: 10px;
    bottom: 5px;
    color: rgba(255, 255, 255, 0.17);
    font-size: 82px;
    font-weight: 500;
    line-height: 100px;
  }
  .comment {
    position: absolute;
    top: 108px;
    left: 4px;
    width: 1219px;
    height: 342px;
    padding: 2px 3px;
    background: rgba(150, 150, 150, 0.55);
    box-shadow: 0 3px 6px rgba(0, 0, 0, 0.5);
  }
  .comment h2 {
    height: 30px;
    padding-left: 7px;
    border: 1px solid #bbb;
    background: #acacac;
    color: #eee;
    font-size: 20px;
    font-weight: bold;
    line-height: 30px;
    text-shadow: 2px 2px 1px #222;
  }
  .grip {
    position: absolute;
    right: 2px;
    bottom: 2px;
    width: 12px;
    height: 12px;
  }
  .node {
    position: absolute;
    border: 1px solid #0b0b0b;
    border-radius: 6px;
    overflow: hidden;
    background: rgba(22, 25, 22, 0.93);
    box-shadow: 0 3px 6px rgba(0, 0, 0, 0.6);
    color: #eee;
    white-space: nowrap;
  }
  .node.selected {
    border: 3px solid;
    border-color: #f3ad0b #e58a08 #d56c00;
    box-shadow: inset 0 0 0 1px #2c1a00, 0 2px 4px rgba(0, 0, 0, 0.5);
  }
  .node.pure {
    border-radius: 13px;
    background: linear-gradient(rgba(135, 135, 135, 0.9), rgba(80, 80, 80, 0.88) 30%, rgba(60, 60, 60, 0.9));
  }
  .node.red { background: radial-gradient(ellipse 45px 22px at 50% 8px, rgba(150, 50, 50, 0.8), transparent), linear-gradient(rgba(125, 125, 125, 0.9), rgba(80, 80, 80, 0.88) 30%, rgba(60, 60, 60, 0.9)); }
  .node.speed { background: radial-gradient(ellipse 80px 26px at 50% 4px, #7fa552, transparent), linear-gradient(rgba(130, 130, 130, 0.9), rgba(74, 74, 74, 0.88) 30%, rgba(58, 58, 58, 0.9)); }
  .node.charmove { background: radial-gradient(ellipse 60px 24px at 50% 4px, #3c8fb5, transparent), linear-gradient(rgba(110, 110, 110, 0.9), rgba(62, 62, 62, 0.95) 60%); }
  .head {
    display: flex;
    align-items: center;
    gap: 4px;
    height: 20px;
    margin-bottom: 2px;
    padding: 1px 0 0 8px;
    font-weight: bold;
  }
  .head svg { width: 12px; height: 12px; }
  .event .head { background: linear-gradient(90deg, #8f1d20 50%, #3a3535); box-shadow: inset 0 1px 2px #c66; }
  .branch .head { background: linear-gradient(90deg, #8f8f8f, #555 55%, #777 80%, #444); box-shadow: inset 0 1px 2px #bbb; }
  .title {
    position: absolute;
    top: 6px;
    width: 100%;
    font-weight: bold;
    text-align: center;
  }
  .pins {
    display: flex;
    justify-content: space-between;
    padding: 0 9px 0 10px;
  }
  .pure .pins { padding-top: 8px; }
  .row {
    display: flex;
    align-items: center;
    gap: 5px;
    height: 24px;
  }
  .end .row { justify-content: flex-end; }
  .pin { width: 12px; height: 12px; }
  .event .row { justify-content: flex-end; height: 23px; padding-right: 8px; }
  .event { left: 45px; top: 202px; width: 185px; height: 95px; }
  .setrun { left: 341px; top: 214px; width: 127px; height: 62px; }
  .branch { left: 569px; top: 200px; width: 150px; height: 77px; }
  .run { left: 961px; top: 146px; width: 200px; height: 88px; }
  .walk { left: 974px; top: 295px; width: 200px; height: 88px; }
  .speed input {
    width: 35px;
    height: 16px;
    padding: 0;
    border: 1px solid #ccc;
    background: none;
    color: #ddd;
    font-size: 11px;
    text-align: center;
  }
  .compact {
    display: flex;
    align-items: center;
    justify-content: flex-end;
    gap: 4px;
    padding: 0 12px;
  }
  .charmove { left: 799px; top: 241px; width: 143px; height: 33px; }
  .not { left: 207px; top: 364px; width: 138px; height: 31px; padding: 0 9px; justify-content: space-between; }
  .not strong { color: #a5a5a5; font-size: 22px; }
  .getrun { left: 45px; top: 378px; width: 111px; height: 29px; }

  .crumbs {
    position: absolute;
    inset: 0 0 auto;
    display: flex;
    align-items: center;
    height: 52px;
    padding: 0 6px 2px 8px;
    background: rgba(0, 0, 0, 0.6);
    color: #8d8d8d;
    font-size: 23px;
    line-height: 28px;
  }
  .crumbs i { width: 1px; height: 44px; margin: 0 14px 0 8px; background: #777; }
  .crumbs a { margin: 0 9px 0 16px; color: inherit; text-decoration: none; }
  .star { width: 26px; height: 26px; }
  .nav { width: 22px; height: 28px; }
  .back { margin-right: 31px; }
  .forward { margin-right: 10px; }
  .bigicon { width: 32px; height: 26px; }
  .chev { width: 12px; height: 22px; margin-right: 13px; }
  .crumbs strong { margin-left: auto; color: #3c3c3c; font-size: 26px; }
  .toast {
    position: absolute;
    top: 0;
    right: 0;
    left: 544px;
    height: 13px;
    background: rgba(70, 70, 70, 0.35);
  }
  .scroll {
    position: absolute;
    right: 71px;
    bottom: 0;
    left: 0;
    height: 5px;
    border-top: 1px solid #444;
    background: #858383;
  }

  /* compiler results */
  .results { padding-top: 6px; }
  .results .panel {
    display: flex;
    flex-direction: column;
    height: 158px;
    padding: 7px 8px 0 7px;
  }
  .results ul {
    height: 104px;
    padding: 6px 11px;
    background: #222;
    color: #9a9a9a;
    font-family: 'Liberation Mono', 'Noto Sans CJK KR', monospace;
    list-style: none;
  }
  .results li::before {
    content: '•';
    display: inline-block;
    width: 22px;
    color: #6bbcf5;
  }
  .clear {
    align-self: flex-end;
    margin: 10px 7px 0 0;
  }

  /* details */
  .right .panel { flex: 1; }
  .detailbar {
    display: flex;
    align-items: center;
    height: 36px;
    padding: 0 9px 0 5px;
  }
  .matrix {
    display: grid;
    place-items: center;
    width: 33px;
    height: 28px;
    margin: 0 6px 0 11px;
    border: 1px solid #777;
    border-radius: 2px;
    background: linear-gradient(#ccc, #aaa);
  }
  .matrix svg { width: 18px; height: 18px; }
  .right p {
    margin: 26px 6px 0;
    overflow: hidden;
    white-space: nowrap;
  }
</style>
